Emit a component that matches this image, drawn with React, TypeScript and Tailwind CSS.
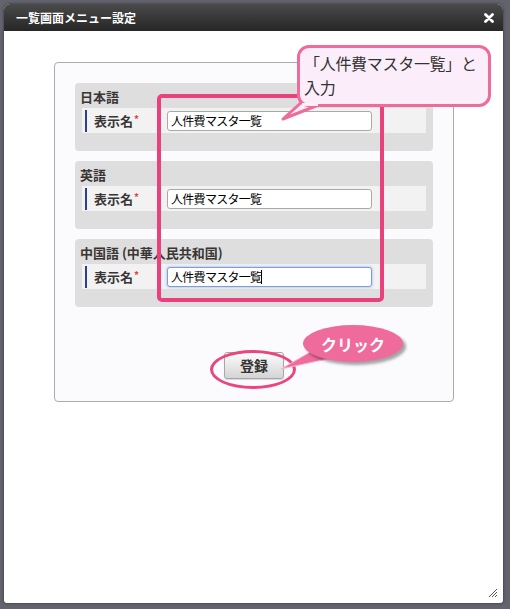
import React from "react";

const sections = [
  { id: "ja", title: "日本語", focused: false },
  { id: "en", title: "英語", focused: false },
  { id: "zh", title: "中国語 (中華人民共和国)", focused: true },
];

// fake text box, the third one has the caret
const TextBox: React.FC<{ value: string; focused?: boolean }> = ({ value, focused }) => (
  <div
    className={
      focused
        ? "flex items-center w-[205px] h-[20px] px-[3px] rounded-[3px] border border-[#7d9be3] bg-white shadow-[0_0_3px_rgba(90,120,220,0.55)] text-[12px] tracking-[-0.7px] text-black leading-none"
        : "flex items-center w-[205px] h-[20px] px-[3px] rounded-[3px] border border-[#a9a9a9] bg-white text-[12px] tracking-[-0.7px] text-black leading-none"
    }
  >
    <span>{value}</span>
    {focused && <span className="w-[1px] h-[14px] bg-black" />}
  </div>
);

export default function App() {
  return (
    <div className="relative w-[510px] h-[609px] overflow-hidden bg-[#63636e] p-[4px] font-['Noto_Sans_CJK_JP','Liberation_Sans',sans-serif]">
      {/* dialog */}
      <div className="flex flex-col w-[499px] h-[599px] rounded-t-[6px] rounded-b-[3px] bg-white overflow-hidden shadow-[0_0_3px_rgba(0,0,0,0.5)]">
        {/* title bar */}
        <div className="flex items-center justify-between h-[27px] pl-[12px] pr-[9px] bg-gradient-to-b from-[#4b4b4b] to-[#262626]">
          <span className="text-[12px] font-bold text-white leading-none">一覧画面メニュー設定</span>
          <svg width="10" height="10" viewBox="0 0 10 10">
            <path d="M1.5 1.5L8.5 8.5M8.5 1.5L1.5 8.5" stroke="#fff" strokeWidth="2.8" strokeLinecap="round" />
          </svg>
        </div>

        {/* body */}
        <div className="flex-1 flex flex-col pl-[50px] pt-[31px]">
          <div className="flex flex-col gap-[10px] w-[400px] h-[340px] px-[20px] pt-[20px] rounded-[4px] border border-[#ababab] bg-[#fbfbfe]">
            {sections.map((s) => (
              <div key={s.id} className="flex flex-col h-[68px] pt-[5px] rounded-[4px] bg-[#dedede]">
                <div className="px-[5px] text-[13px] font-bold text-[#3a3535] leading-[18px]">{s.title}</div>
                <div className="flex items-center h-[25px] mt-[2px] mx-[7px] pl-[3px] bg-[#f2f2f2]">
                  <div className="w-[2px] h-[22px] bg-[#2d3f8e]" />
                  <div className="flex items-start w-[80px] pl-[7px] text-[13px] font-bold text-[#3a3535] leading-none">
                    表示名<span className="ml-[1px] text-[10px] text-[#e2453f]">*</span>
                  </div>
                  <TextBox value="人件費マスタ一覧" focused={s.focused} />
                </div>
              </div>
            ))}
            <div className="flex justify-center mt-[35px]">
              <button className="w-[60px] h-[27px] rounded-[3px] border border-[#a6a6a6] bg-gradient-to-b from-[#fdfdfd] to-[#d4d4d4] text-[14px] font-bold text-[#333] shadow-[0_1px_1px_rgba(0,0,0,0.15)]">
                登録
              </button>
            </div>
          </div>
        </div>

        {/* resize grip */}
        <div className="flex justify-end pr-[5px] pb-[5px]">
          <svg width="10" height="10" viewBox="0 0 10 10">
            <path d="M9 1L1 9M9 4L4 9M9 7L7 9" stroke="#555" strokeWidth="1" />
          </svg>
        </div>
      </div>

      {/* annotation: pink frame around the inputs */}
      <div className="absolute left-[157px] top-[94px] w-[227px] h-[208px] rounded-[5px] border-[4px] border-[#e8417d]" />

      {/* annotation: speech bubble */}
      <svg className="absolute left-0 top-0 pointer-events-none" width="510" height="609">
        <path d="M304 100 L283 119 L326 102" fill="#fbeefa" stroke="#ef6b9c" strokeWidth="3" strokeLinejoin="round" />
      </svg>
      <div className="absolute left-[297px] top-[45px] w-[194px] h-[62px] pl-[4px] pt-[3px] rounded-[12px] border-[3px] border-[#ef6b9c] bg-[#fbeefa] text-[16px] leading-[24px] text-[#333] tracking-[-0.3px]">
        「人件費マスタ一覧」と<br />入力
      </div>
      <svg className="absolute left-0 top-0 pointer-events-none" width="510" height="609">
        <path d="M302 104.5 L318 104.5" stroke="#fbeefa" strokeWidth="3" />
      </svg>

      {/* annotation: ring round the button and the click bubble */}
      <div className="absolute left-[210px] top-[350px] w-[86px] h-[39px] rounded-[50%] border-[3px] border-[#e9457f]" />
      <svg className="absolute left-0 top-0 pointer-events-none" width="510" height="609">
        <path d="M312 351 L281 369 L332 358 Z" fill="#ee6b9b" stroke="#f7b8cf" strokeWidth="1" />
      </svg>
      <div className="absolute left-[303px] top-[325px] flex items-center justify-center w-[100px] h-[37px] rounded-[50%] bg-[#ee6b9b] shadow-[3px_3px_3px_rgba(0,0,0,0.35)] text-[16px] font-bold text-white">
        クリック
      </div>
    </div>
  );
}
